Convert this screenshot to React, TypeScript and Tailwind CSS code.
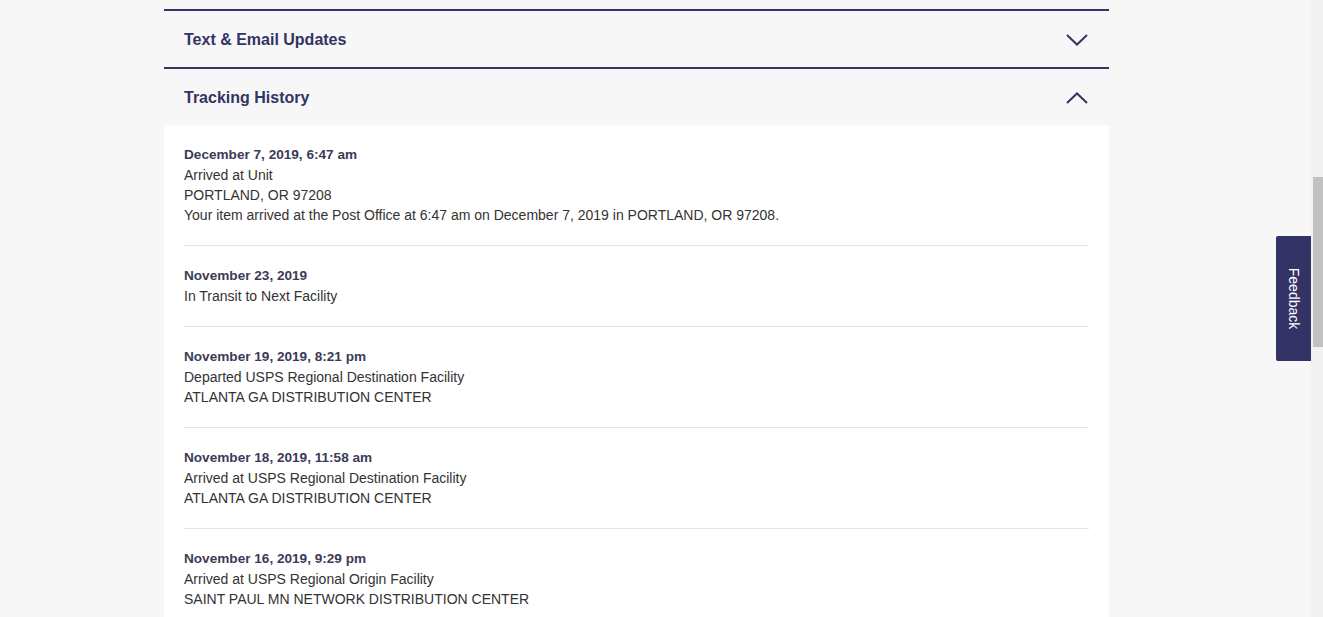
import React from "react";

const events = [
  {
    date: "December 7, 2019, 6:47 am",
    lines: [
      "Arrived at Unit",
      "PORTLAND, OR 97208",
      "Your item arrived at the Post Office at 6:47 am on December 7, 2019 in PORTLAND, OR 97208.",
    ],
  },
  { date: "November 23, 2019", lines: ["In Transit to Next Facility"] },
  {
    date: "November 19, 2019, 8:21 pm",
    lines: ["Departed USPS Regional Destination Facility", "ATLANTA GA DISTRIBUTION CENTER"],
  },
  {
    date: "November 18, 2019, 11:58 am",
    lines: ["Arrived at USPS Regional Destination Facility", "ATLANTA GA DISTRIBUTION CENTER"],
  },
  {
    date: "November 16, 2019, 9:29 pm",
    lines: ["Arrived at USPS Regional Origin Facility", "SAINT PAUL MN NETWORK DISTRIBUTION CENTER"],
  },
];

function Chevron({ up }: { up?: boolean }) {
  return (
    <svg width="22" height="12" viewBox="0 0 22 12" fill="none">
      <path
        d={up ? "M1 11L11 1.5L21 11" : "M1 1L11 10.5L21 1"}
        stroke="#333366"
        strokeWidth="2"
      />
    </svg>
  );
}

function AccordionHeader({ title, open }: { title: string; open?: boolean }) {
  return (
    <div className="flex h-[58px] items-center justify-between border-t-2 border-[#333366] pl-5 pr-[21px] pt-[2px]">
      <div className="text-[16px] font-bold text-[#333366]">{title}</div>
      <Chevron up={open} />
    </div>
  );
}

export default function App() {
  return (
    <div
      className="relative flex h-[617px] w-full overflow-hidden bg-[#f7f7f7]"
      style={{ fontFamily: '"Liberation Sans", Arial, sans-serif' }}
    >
      <div className="flex-1">
        <div className="ml-[164px] w-[945px] pt-[9px]">
          <AccordionHeader title="Text & Email Updates" />
          <AccordionHeader title="Tracking History" open />
          <div className="bg-white px-5">
            {events.map((e, i) => (
              <div key={i} className="border-b border-[#e5e5e5] py-5 text-[14px] leading-5">
                <div className="text-[13.6px] font-bold text-[#3b3b58]">{e.date}</div>
                {e.lines.map((l, j) => (
                  <div key={j} className="text-[#333]">
                    {l}
                  </div>
                ))}
              </div>
            ))}
          </div>
        </div>
      </div>

      <div className="flex w-[12px] flex-col bg-[#f1f1f1] pl-[2px]">
        <div className="mt-[177px] h-[170px] w-full bg-[#c1c1c1]" />
      </div>

      <div className="absolute left-[1276px] top-[236px] flex h-[125px] w-[35px] items-center justify-center rounded-l-[2px] bg-[#333366]">
        <div className="rotate-90 whitespace-nowrap text-[14px] text-white">Feedback</div>
      </div>
    </div>
  );
}
